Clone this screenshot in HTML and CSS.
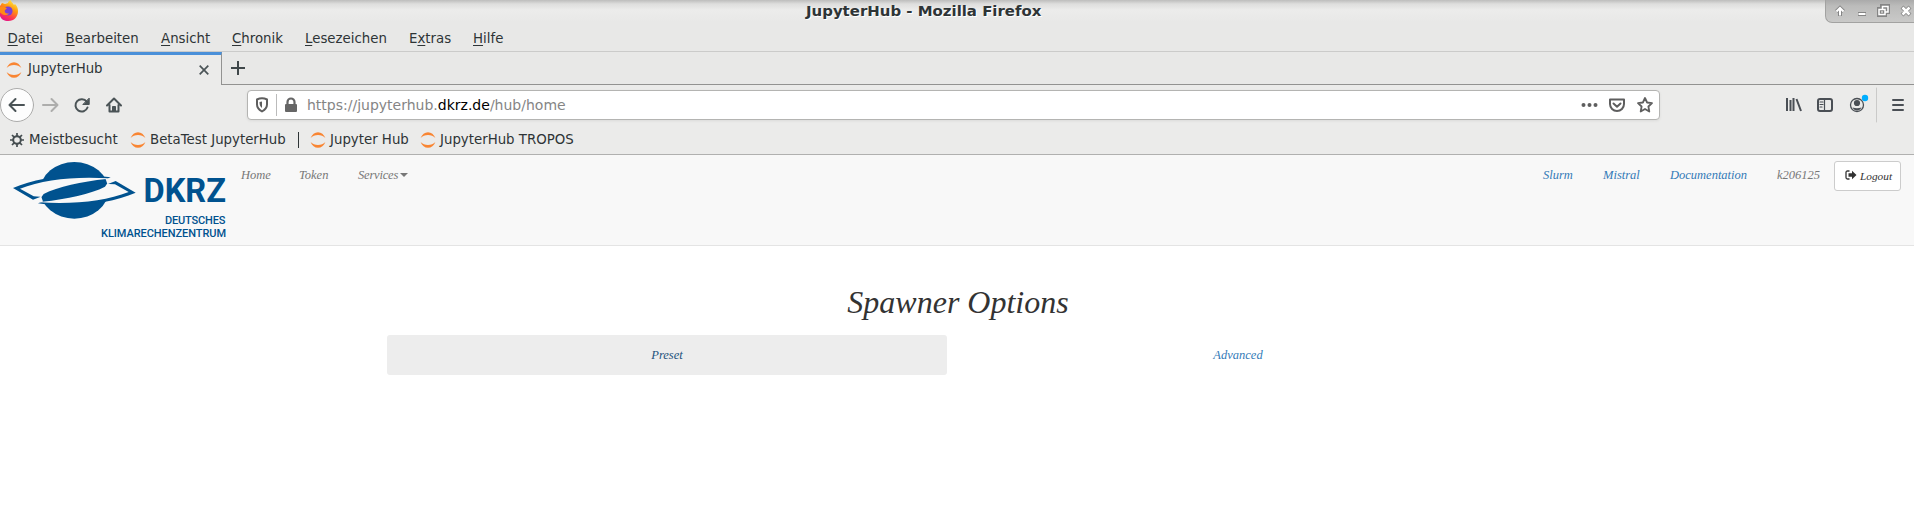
FILE: index.html
```html
<!DOCTYPE html>
<html lang="de">
<head>
<meta charset="utf-8">
<title>JupyterHub</title>
<link rel="stylesheet" href="styles.css">
</head>
<body>
<svg class="defs" width="0" height="0">
  <symbol id="jupyter" viewBox="0 0 16 16"><path d="M.6 6C2 2.400 4.800.2 8 .2s6 2.200 7.400 5.800C13.500 4 11 3 8 3S2.500 4 .6 6zM.6 10C2 13.600 4.800 15.800 8 15.800s6-2.200 7.400-5.800C13.500 12 11 13 8 13s-5.500-1-7.400-3z" fill="#f98532"/></symbol>
</svg>
<header class="titlebar">
  <svg class="firefox" width="19" height="21" viewBox="0 0 19 21">
    <defs>
      <linearGradient id="ff" x1=".8" y1="0" x2=".3" y2="1"><stop offset="0" stop-color="#fff24a"/><stop offset=".4" stop-color="#ff980e"/><stop offset=".75" stop-color="#ff3750"/><stop offset="1" stop-color="#e31587"/></linearGradient>
    </defs>
    <path d="M0 6l2-3 3 1 3-1C8 2 9 1 10.500 0c.5 2 2.500 3 3.500 5l1-1c2 2 3 4 3 7 0 6-4 10-9.500 10C4 21 1 19 0 16z" fill="url(#ff)"/>
    <circle cx="8" cy="11" r="4.600" fill="#7a3fd8"/>
    <path d="M0 7c3-1 5 0 7 1.500L5 10c-1 2 1 4 4 3.500-2 2.500-6 2-9-1z" fill="#ff8a16"/>
  </svg>
  <div class="title">JupyterHub - Mozilla Firefox</div>
  <div class="controls">
    <svg width="90" height="23" viewBox="0 0 90 23" fill="none">
      <g stroke="#858585" stroke-width="4"><path d="M14 16V8M10.500 11.500L14 8l3.500 3.500M32 14h8M53 9h6v6h-6zM56 9V6h6v6h-3M76 7l8 8M84 7l-8 8"/></g>
      <g stroke="#fff" stroke-width="2"><path d="M14 15.500V8.500M10.500 11.500L14 8l3.500 3.500M32.500 14h7"/><path d="M53 9.500h6v5h-6zM56.500 9V6.500h5.500V12h-3" stroke-width="1.500"/><path d="M76.500 7.500l7 7M83.500 7.500l-7 7" stroke-width="2.500"/></g>
    </svg>
  </div>
</header>
<nav class="menubar">
  <span class="m1"><u>D</u>atei</span><span class="m2"><u>B</u>earbeiten</span><span class="m3"><u>A</u>nsicht</span><span class="m4"><u>C</u>hronik</span><span class="m5"><u>L</u>esezeichen</span><span class="m6">E<u>x</u>tras</span><span><u>H</u>ilfe</span>
</nav>
<div class="tabs">
  <div class="tab">
    <svg width="16" height="16"><use href="#jupyter"/></svg><span>JupyterHub</span>
    <svg class="close" width="10" height="10" viewBox="0 0 10 10"><path d="M.7.700l8.600 8.600M9.300.700L.7 9.300" stroke="#4b5457" stroke-width="1.700"/></svg>
  </div>
  <div class="strip"><svg width="14" height="14" viewBox="0 0 14 14"><path d="M7 .5v13M.5 7h13" stroke="#3f474a" stroke-width="2" stroke-linecap="round"/></svg></div>
</div>
<div class="toolbar">
  <svg width="130" height="36" viewBox="0 0 130 36" fill="none" stroke="#4a5356" stroke-width="2" stroke-linecap="round" stroke-linejoin="round">
    <circle cx="17" cy="18" r="16.500" fill="#fdfdfd" stroke="#acacab" stroke-width="1"/>
    <path d="M10 18h14M15.500 12l-6 6 6 6"/>
    <path d="M43 18h14M51.500 12l6 6-6 6" stroke="#adadac"/>
    <path d="M87.500 20.500a6.200 6.200 0 1 1-.8-5.800" /><path d="M89.200 11.500v6h-6z" fill="#4a5356" stroke-width="1"/>
    <path d="M107 18.500l7-7 7 7M109.500 18v6.500h9V18" /><path d="M112.500 24v-4.500h3V24z" fill="#4a5356" stroke-width="1"/>
  </svg>
  <div class="urlbar">
    <svg width="44" height="24" viewBox="0 0 44 24">
      <path d="M3 6.500Q8 4 13 6.500v5q0 4-5 7-5-3-5-7z" fill="none" stroke="#5e5e5e" stroke-width="2" stroke-linejoin="round"/><path d="M8 8.500v6.500c-2-1.500-2.500-3-2.500-6z" fill="#5e5e5e"/>
      <path d="M22.500 1v22" stroke="#bbb"/>
      <rect x="31" y="11" width="12" height="8" rx="1" fill="#666"/><path d="M33.500 12V9a3.500 3.500 0 0 1 7 0v3" fill="none" stroke="#666" stroke-width="2.200"/>
    </svg>
    <span class="url">https://jupyterhub.<b>dkrz.de</b>/hub/home</span>
    <svg class="urlicons" width="74" height="20" viewBox="0 0 74 20" fill="none" stroke="#5e5e5e" stroke-width="2" stroke-linejoin="round" stroke-linecap="round">
      <g fill="#5e5e5e" stroke="none"><circle cx="3.500" cy="10" r="2"/><circle cx="9.500" cy="10" r="2"/><circle cx="15.500" cy="10" r="2"/></g>
      <path d="M30 4.500h14v4.500a7 7 0 0 1-14 0zM33.500 8.500l3.500 3.200 3.500-3.200"/>
      <path d="M65 3l2.100 4.500 4.900.6-3.600 3.400.9 5-4.300-2.500-4.300 2.500.9-5L58 8.100l4.900-.6z" stroke-width="1.800"/>
    </svg>
  </div>
  <svg class="tools" width="130" height="36" viewBox="0 0 130 36" fill="none" stroke="#4a4f55" stroke-width="2" stroke-linecap="round">
    <path d="M4 11v13M7.500 13v11M10.500 11v13M13.500 12l4.500 12" stroke-linecap="butt"/>
    <rect x="35" y="12" width="14" height="12" rx="2"/><path d="M41.500 12v12M37 15h3M37 17.500h3M37 20h2" stroke-width="1.200"/>
    <circle cx="74" cy="18" r="6.500" stroke-width="1.300"/><circle cx="74" cy="16" r="3.100" fill="#4a4f55" stroke="none"/><path d="M69.500 20.500q4.500 1.500 9 0-1.500 3-4.500 3t-4.500-3z" fill="#4a4f55" stroke="none"/><circle cx="82" cy="11" r="3.200" fill="#00aeff" stroke="none"/>
    <path d="M93.500 1v34" stroke="#cacac9" stroke-width="1"/>
    <path d="M110 13h10M110 18h10M110 23h10"/>
  </svg>
</div>
<div class="bookmarks">
  <svg class="gear" width="14" height="14" viewBox="0 0 14 14" fill="none" stroke="#454d50"><circle cx="7" cy="7" r="3.800" stroke-width="2"/><path d="M7 0v3M7 11v3M0 7h3M11 7h3M2 2l2.200 2.200M9.800 9.800L12 12M2 12l2.200-2.200M9.800 4.200L12 2" stroke-width="1.700"/></svg>
  <span class="b1">Meistbesucht</span>
  <svg width="16" height="16"><use href="#jupyter"/></svg><span class="b2">BetaTest JupyterHub</span>
  <i class="sep"></i>
  <svg width="16" height="16"><use href="#jupyter"/></svg><span class="b3">Jupyter Hub</span>
  <svg width="16" height="16"><use href="#jupyter"/></svg><span class="b4">JupyterHub TROPOS</span>
</div>
<nav class="navbar">
  <svg class="logo" width="220" height="82" viewBox="0 0 220 82">
    <g transform="scale(.33333)">
      <ellipse cx="199" cy="97" rx="102" ry="85" fill="#00528f"/>
      <g id="band"><path d="M15 90C90 58 200 42 308 58L295 63C220 73 150 86 104 114L75 125z" fill="#00528f"/><path d="M36 92C105 65 200 54 303 61L295 63C220 71 150 86 107 108L100 118 96 116 77 115z" fill="#f8f8f8"/></g>
      <use href="#band" transform="rotate(180 199 97)"/>
    </g>
    <g fill="#00528f" font-family="Roboto, sans-serif">
      <text x="135.500" y="43.500" font-size="33.500" font-weight="700" textLength="82.500" lengthAdjust="spacingAndGlyphs">DKRZ</text>
      <text x="157" y="65.500" font-size="11" font-weight="500" textLength="60.500" lengthAdjust="spacing">DEUTSCHES</text>
      <text x="93" y="78.800" font-size="11" font-weight="500" textLength="125" lengthAdjust="spacing">KLIMARECHENZENTRUM</text>
    </g>
  </svg>
  <span class="n1">Home</span><span class="n2">Token</span><span class="n3">Services<i class="caret"></i></span>
  <div class="right">
    <a class="r1">Slurm</a><a class="r2">Mistral</a><a class="r3">Documentation</a><span class="user">k206125</span>
    <button class="logout"><svg width="12" height="10" viewBox="0 0 12 10"><path d="M4.500 1H2.500Q1 1 1 2.500v5Q1 9 2.500 9h2" fill="none" stroke="#333" stroke-width="1.300"/><path d="M3.500 3.200H7V.7L11.500 5 7 9.300V6.800H3.500z" fill="#333"/></svg><span>Logout</span></button>
  </div>
</nav>
<main>
  <h1>Spawner Options</h1>
  <div class="pills"><a class="active">Preset</a><a>Advanced</a></div>
</main>
</body>
</html>
```

FILE: styles.css
```css
* { box-sizing: border-box; }
body { margin: 0; height: 528px; overflow: hidden; background: #fff; color: #2e3436; font: 13.33px/16px "DejaVu Sans", sans-serif; }
svg { display: block; flex: none; }
.defs { position: absolute; }
span, a { white-space: nowrap; }
.titlebar { height: 26px; display: flex; align-items: flex-start; background: linear-gradient(#bdbdbc, #dededd 4px, #ececeb 10px, #e8e8e7 22px); }
.title { margin-left: 787px; width: 1019px; padding-top: 3px; font-weight: 700; font-size: 14.95px; text-shadow: 1px 1px #fff; white-space: nowrap; }
.controls { width: 89px; height: 23px; border: solid #a2a2a1; border-width: 0 0 1px 1px; border-radius: 0 0 0 7px; background: linear-gradient(#aaa, #bcbcbb 6px, #c9c9c8); overflow: hidden; }
.menubar { height: 26px; padding: 5px 0 0 7.500px; display: flex; background: #e8e8e7; border-bottom: 1px solid #cbcbca; }
.menubar u { text-underline-offset: 2px; text-decoration-thickness: 1px; }
.m1 { width: 58px; } .m2 { width: 95.500px; } .m3 { width: 71px; } .m4 { width: 73px; } .m5 { width: 104px; } .m6 { width: 64px; }
.tabs { height: 33px; display: flex; background: #e8e8e7; }
.tab { width: 222px; display: flex; align-items: center; padding-left: 6px; border-top: 3px solid #4a90d9; border-right: 1px solid #929291; background: #ebebea; }
.tab span { margin-left: 6px; padding-bottom: 2px; }
.tab .close { margin-left: auto; margin-right: 12px; }
.strip { flex: 1; padding: 9px 0 0 9px; border-bottom: 1px solid #929291; }
.toolbar { height: 40px; display: flex; align-items: center; background: #ebebea; }
.urlbar { display: flex; align-items: center; margin-left: 117px; width: 1413px; height: 30px; border: 1px solid #b4b4b2; border-radius: 4px; background: #fff; padding-left: 6px; box-shadow: 0 1px 3px #0001; }
.url { margin-left: 9px; font-size: 14px; color: #858585; }
.url b { font-weight: 400; color: #000; }
.urlicons { margin: 0 5px 0 auto; }
.tools { margin-left: 123px; }
.bookmarks { height: 30px; padding-left: 10px; display: flex; align-items: center; background: #ebebea; border-bottom: 1px solid #b0b0af; }
.bookmarks span { padding-top: 1px; margin-left: 3px; }
.bookmarks .b1 { width: 101px; margin-left: 5px; }
.bookmarks .b2 { width: 148px; margin-left: 4px; }
.sep { width: 1px; height: 16px; background: #2e3436; margin-right: 11px; }
.bookmarks .b3 { width: 90px; margin-left: 4px; }
.bookmarks .b4 { margin-left: 4px; }
.navbar { height: 91px; padding-left: 8px; display: flex; align-items: flex-start; background: #f8f8f8; border-bottom: 1px solid #e4e4e4; }
.navbar, main { font-family: "Z003", "URW Chancery L", "Apple Chancery", "Liberation Serif", serif; font-style: italic; font-size: 12.5px; color: #777; }
.logo { margin-top: 3px; font-style: normal; }
.n1, .n2, .n3, .right a, .user { padding-top: 12px; }
.n1 { margin-left: 13px; width: 58px; } .n2 { width: 59px; }
.n3 { letter-spacing: -.2px; }
.caret { display: inline-block; margin-left: 2px; border: 4px solid transparent; border-top-color: #777; border-bottom: 0; vertical-align: 2px; }
.right { margin-left: auto; display: flex; align-items: flex-start; }
a { color: #337ab7; }
.r1 { width: 60px; } .r2 { width: 67px; } .r3 { width: 107px; }
.user { width: 57px; }
.logout { width: 67px; height: 30px; margin: 6px 13px 0 0; padding: 0 0 0 10px; display: flex; align-items: center; font: inherit; font-size: 11.3px; color: #333; background: #fff; border: 1px solid #ccc; border-radius: 3px; }
.logout svg { margin-bottom: 3px; }
.logout span { margin-left: 3px; }
main { padding-left: 387px; }
h1 { margin: 38px 387px 0 2px; text-align: center; font-size: 32px; line-height: 36px; font-weight: 400; color: #333; }
.pills { margin-top: 15px; display: flex; gap: 11px; }
.pills a { width: 560px; height: 40px; padding-top: 12px; text-align: center; border-radius: 3px; }
.pills .active { color: #23527c; background: #ededed; }
```
